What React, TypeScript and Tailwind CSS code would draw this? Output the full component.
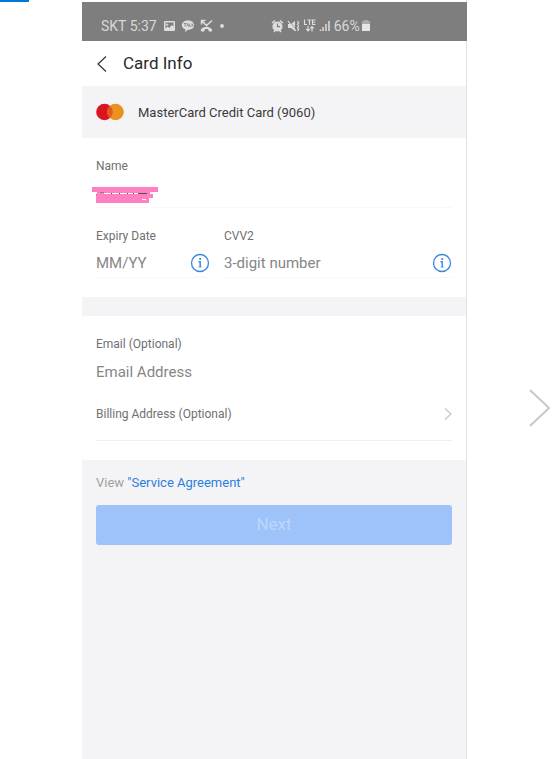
import type { ReactNode } from 'react';

const LINE = 'border-b border-[#f8f8f8]';

/* Status bar: carrier, clock, notification and system icons */
function StatusBar() {
  return (
    <div className="-mr-px flex h-[39px] items-center bg-[#7e7e7e] pt-2 pl-[19px] text-sm text-[#d8d8d8]">
      <span className="mr-1">SKT 5:37</span>
      <svg className="w-[63px]" height="16" viewBox="0 0 63 16" fill="#dedede" aria-hidden="true">
        <rect x="3" y="3" width="11" height="10" rx="1" />
        <path d="M4.500 4.500h8v4l-2-1.500-2 3-2-1.500-2 2z" fill="#7e7e7e" />
        <path d="M6 5l.6 1.300 1.300.5-1.300.5L6 8.600l-.6-1.300-1.200-.5 1.200-.5z" />
        <path d="M27 2.500c3.600 0 6.200 2 6.200 4.700s-2.600 4.600-6.200 4.600l-2.800 2.400.3-2.800c-2.300-.8-3.700-2.300-3.700-4.200 0-2.700 2.600-4.700 6.200-4.700z" />
        <path d="M22.500 5.500h3m-1.500 0v3m1.700 0l1-3 1 3m1-3v3h1.300m1-3v3m1.800-3l-1.600 1.500 1.600 1.500" fill="none" stroke="#7e7e7e" strokeWidth=".8" />
        <path d="M41 3l4.500 4.500L51 2.500M40.500 6.500v-4h4" fill="none" stroke="#dedede" strokeWidth="1.500" />
        <path d="M39.500 12c1.600-2.200 3.800-3.200 6-3.200s4.400 1 6 3.200l-1.700 2-2.500-1.300v-1.500c-1.100-.4-2.500-.4-3.600 0v1.500L41.200 14z" />
        <circle cx="61" cy="8" r="1.900" />
      </svg>
      <svg className="ml-[46px]" width="60" height="16" viewBox="0 0 60 16" fill="none" stroke="#dedede" strokeWidth="1.200" aria-hidden="true">
        <circle cx="7.500" cy="8.500" r="4.500" fill="#dedede" />
        <path d="M2 5l3-2.500m5 0L13 5M4 14l1.500-2m5.500 2l-1.500-2" strokeWidth="1.500" />
        <path d="M7.500 5.500v3.200H10" stroke="#7e7e7e" />
        <path d="M18 6h3l4-3v10l-4-3h-3z" fill="#dedede" stroke="none" />
        <path d="M18 3l8 10" strokeWidth="1.200" />
        <path d="M19.500 3l8 10" stroke="#7e7e7e" strokeWidth=".7" />
        <path d="M27.500 3l1.200 1.600-1.200 1.700L28.700 8l-1.200 1.700 1.200 1.600-1.200 1.700" />
        <path d="M34.500 1.500v5H37M37.500 2h4m-2 0v5M45.500 2h-3v4.500h3m-3-2.300h2.700" strokeWidth="1.100" />
        <path d="M38 8v5m-1.800-1.800L38 13l1.800-1.800M42 13.500v-5m-1.800 1.800L42 8.500l1.800 1.800" strokeWidth="1.200" />
        <path d="M50.500 13v-1.500M53 13V9M56 13V6M59 13V3" strokeWidth="1.500" />
      </svg>
      <span className="ml-1">66%</span>
      <svg className="ml-px" width="10" height="16" viewBox="0 0 10 16" aria-hidden="true">
        <path d="M3 2h4v1h2v4H1V3h2z" fill="#aaaaaa" />
        <path d="M1 6h8v7H1z" fill="#e6e6e6" />
      </svg>
    </div>
  );
}

function InfoButton({ label }: { label: string }) {
  return (
    <button type="button" aria-label={label} className="shrink-0">
      <svg width="20" height="20" viewBox="0 0 20 20" fill="none" stroke="#3a86dc">
        <circle cx="10" cy="10" r="8.500" strokeWidth="1.300" />
        <path d="M8.500 8.800h1.700V14" strokeWidth="1.400" />
        <path d="M8.500 14h3.200" strokeWidth=".8" />
        <circle cx="10.200" cy="6" r="1.100" fill="#3a86dc" stroke="none" />
      </svg>
    </button>
  );
}

type FieldProps = {
  id: string;
  label: string;
  placeholder?: string;
  line?: string;
  className?: string;
  children?: ReactNode;
};

function Field({ id, label, placeholder, line = LINE, className = '', children }: FieldProps) {
  return (
    <div className={className}>
      <label htmlFor={id} className="block text-xs leading-4 text-[#707070]">
        {label}
      </label>
      <div className={`relative mt-[5px] flex h-[29px] items-center ${line}`}>
        <input
          id={id}
          type="text"
          placeholder={placeholder}
          className="w-full min-w-0 flex-1 bg-transparent pt-px text-[15px] text-[#333333] outline-none placeholder:text-[#868686]"
        />
        {children}
      </div>
    </div>
  );
}

/* Marker strokes that hide the card holder's name */
function HiddenName() {
  return (
    <svg className="absolute top-2 -left-1" width="66" height="16" viewBox="0 0 66 16" shapeRendering="crispEdges" aria-hidden="true">
      <path d="M0 0h66v5h-8v2h3v4h-4v5H4V7h1V5H0z" fill="#ff80c0" />
      <path d="M12 6h43v1H12z" fill="#ffffff" />
      <path d="M8 5h4v1H8zM4 7h1v1H4z" fill="#8a8088" />
      <path d="M19 6h1v1h-1zM27 6h1v1h-1zM35 6h1v1h-1zM41 6h1v1h-1zM46 6h9v1h-9z" fill="#555055" />
      <path d="M50 12h4v1h-4z" fill="#ffffff" />
    </svg>
  );
}

export default function App() {
  return (
    <div className="flex min-h-screen bg-white font-[Roboto,'Liberation_Sans',sans-serif]">
      <div className="w-[82px] shrink-0">
        <div className="h-[2px] w-[29px] bg-[#0078d7]" />
      </div>

      <main className="flex min-w-0 flex-1 flex-col border-r border-[#e2e2e4] bg-[#f4f4f7]">
        <div className="h-[2px] bg-white" />
        <StatusBar />

        <header className="flex h-[45px] items-center bg-white pl-[14px]">
          <button type="button" aria-label="Back" className="mr-4">
            <svg width="11" height="18" viewBox="0 0 11 18" fill="none" stroke="#333333" strokeWidth="1.200">
              <path d="M10 1.500L2 9l8 7.500" />
            </svg>
          </button>
          <h1 className="pt-px text-[17px] text-[#2a2a2a]">Card Info</h1>
        </header>

        <div className="flex h-[52px] items-center px-[14px]">
          <svg width="28" height="18" viewBox="0 0 28 18" aria-hidden="true">
            <circle cx="8.500" cy="9" r="8.300" fill="#dc1420" />
            <circle cx="19.500" cy="9" r="8.300" fill="#ea921e" />
            <path d="M14 2.800a8.300 8.300 0 0 1 0 12.400a8.300 8.300 0 0 1 0-12.400z" fill="#e2591a" />
          </svg>
          <p className="ml-[14px] pt-px text-[13px] text-[#3a3a3a]">MasterCard Credit Card (9060)</p>
        </div>

        <form onSubmit={(e) => e.preventDefault()}>
          <section className="bg-white px-[14px] pt-5 pb-[19px]">
            <Field id="name" label="Name">
              <HiddenName />
            </Field>
            <div className="mt-5 flex gap-[14px]">
              <Field id="expiry" label="Expiry Date" placeholder="MM/YY" className="w-[114px]">
                <InfoButton label="About expiry date" />
              </Field>
              <Field id="cvv" label="CVV2" placeholder="3-digit number" className="min-w-0 flex-1">
                <InfoButton label="About CVV2" />
              </Field>
            </div>
          </section>

          <section className="mt-[19px] bg-white px-[14px] pt-5 pb-[19px]">
            <Field id="email" label="Email (Optional)" placeholder="Email Address" line="" />
            <button type="button" className="mt-5 flex w-full items-center justify-between border-b border-[#eeeeee] pb-[18px] text-xs leading-4 text-[#707070]">
              Billing Address (Optional)
              <svg width="9" height="14" viewBox="0 0 9 14" fill="none" stroke="#c8c8c8" strokeWidth="1.300">
                <path d="M2 1.500L8 7l-6 5.500" />
              </svg>
            </button>
          </section>

          <div className="px-[14px] pt-[15px]">
            <p className="text-[13px] leading-4 text-[#a0a0a0]">
              View{' '}
              <a href="#service-agreement" className="text-[#2a7fdc]">
                "Service Agreement"
              </a>
            </p>
            <button type="submit" className="mt-[14px] h-10 w-full rounded-[3px] bg-[#9ec3fa] pb-px text-[17px] text-[#bcd6fc]">
              Next
            </button>
          </div>
        </form>
      </main>

      <aside className="flex w-[85px] shrink-0 items-center justify-end pt-[57px]">
        <button type="button" aria-label="Next picture">
          <svg width="24" height="40" viewBox="0 0 24 40" fill="none" stroke="#c8c8c8" strokeWidth="2">
            <path d="M2 2l19 18L2 38" />
          </svg>
        </button>
      </aside>
    </div>
  );
}
